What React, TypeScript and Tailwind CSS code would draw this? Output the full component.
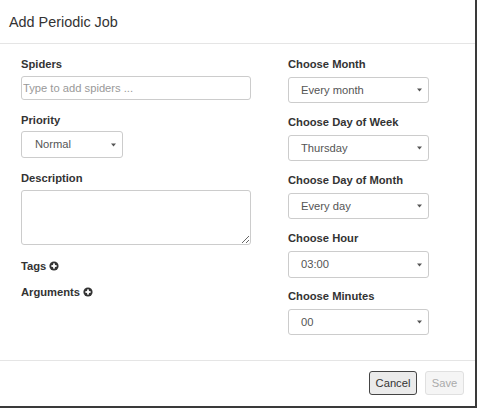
import React from "react";

const font = { fontFamily: '"Liberation Sans", Arial, Helvetica, sans-serif' };

function Caret() {
  return (
    <svg width="5" height="4" viewBox="0 0 5 4" className="shrink-0">
      <path d="M0 0.5 L5 0.5 L2.5 3.5 Z" fill="#555" />
    </svg>
  );
}

function PlusCircle() {
  return (
    <svg width="10" height="10" viewBox="0 0 10 10" className="shrink-0">
      <circle cx="5" cy="5" r="4.6" fill="#333" />
      <rect x="2.4" y="4.1" width="5.2" height="1.8" fill="#fff" />
      <rect x="4.1" y="2.4" width="1.8" height="5.2" fill="#fff" />
    </svg>
  );
}

function Select({ value, className }: { value: string; className: string }) {
  return (
    <div
      className={`flex items-center justify-between border border-[#ccc] rounded-[3px] bg-white pl-[12px] pr-[6px] text-[11.2px] text-[#555] ${className}`}
    >
      <span>{value}</span>
      <Caret />
    </div>
  );
}

function Label({ children, className = "" }: { children: React.ReactNode; className?: string }) {
  return (
    <div className={`h-4 leading-4 text-[11.2px] font-bold text-[#333] ${className}`}>{children}</div>
  );
}

export default function App() {
  return (
    <div
      style={font}
      className="w-[477px] h-[408px] flex flex-col bg-white border-r-2 border-b-2 border-[#3a3a3a] text-[#333]"
    >
      <div className="h-[44px] shrink-0 flex items-center pl-[9px] border-b border-[#e5e5e5]">
        <span className="text-[14.4px] leading-5 text-[#333]">Add Periodic Job</span>
      </div>

      <div className="flex-1 flex">
        <div className="w-[267px] pl-[21px] pt-[12px] flex flex-col">
          <Label className="mb-[4px]">Spiders</Label>
          <input
            placeholder="Type to add spiders ..."
            className="w-[230px] h-[24px] border border-[#ccc] rounded-[3px] px-[1px] text-[11.2px] text-[#555] placeholder:text-[#999] outline-none mb-[12px]"
          />
          <Label className="mb-[3px]">Priority</Label>
          <Select value="Normal" className="w-[102px] h-[27px] pl-[13px] pr-[6px] mb-[12px]" />
          <Label className="mb-[4px]">Description</Label>
          <textarea className="w-[230px] h-[55px] border border-[#ccc] rounded-[3px] outline-none mb-[13px] block" />
          <Label className="flex items-center gap-[3px] mb-[10px]">
            <span>Tags</span>
            <PlusCircle />
          </Label>
          <Label className="flex items-center gap-[3px]">
            <span>Arguments</span>
            <PlusCircle />
          </Label>
        </div>

        <div className="pl-[21px] pt-[12px] flex flex-col">
          <Label className="mb-[5px]">Choose Month</Label>
          <Select value="Every month" className="w-[141px] h-[26px] mb-[11px]" />
          <Label className="mb-[5px]">Choose Day of Week</Label>
          <Select value="Thursday" className="w-[141px] h-[26px] mb-[11px]" />
          <Label className="mb-[5px]">Choose Day of Month</Label>
          <Select value="Every day" className="w-[141px] h-[26px] mb-[11px]" />
          <Label className="mb-[5px]">Choose Hour</Label>
          <Select value="03:00" className="w-[141px] h-[27px] mb-[10px]" />
          <Label className="mb-[5px]">Choose Minutes</Label>
          <Select value="00" className="w-[141px] h-[26px]" />
        </div>
      </div>

      <div className="h-[46px] shrink-0 border-t border-[#e5e5e5] flex justify-end items-start pt-[10px] pr-[11px] gap-[8px]">
        <button className="w-[48px] h-[24px] border border-[#444] rounded-[3px] bg-[#ebebeb] text-[11.2px] text-[#333]">
          Cancel
        </button>
        <button className="w-[39px] h-[24px] border border-[#e0e0e0] rounded-[3px] bg-[#f5f5f5] text-[11.2px] text-[#aaa]">
          Save
        </button>
      </div>
    </div>
  );
}
